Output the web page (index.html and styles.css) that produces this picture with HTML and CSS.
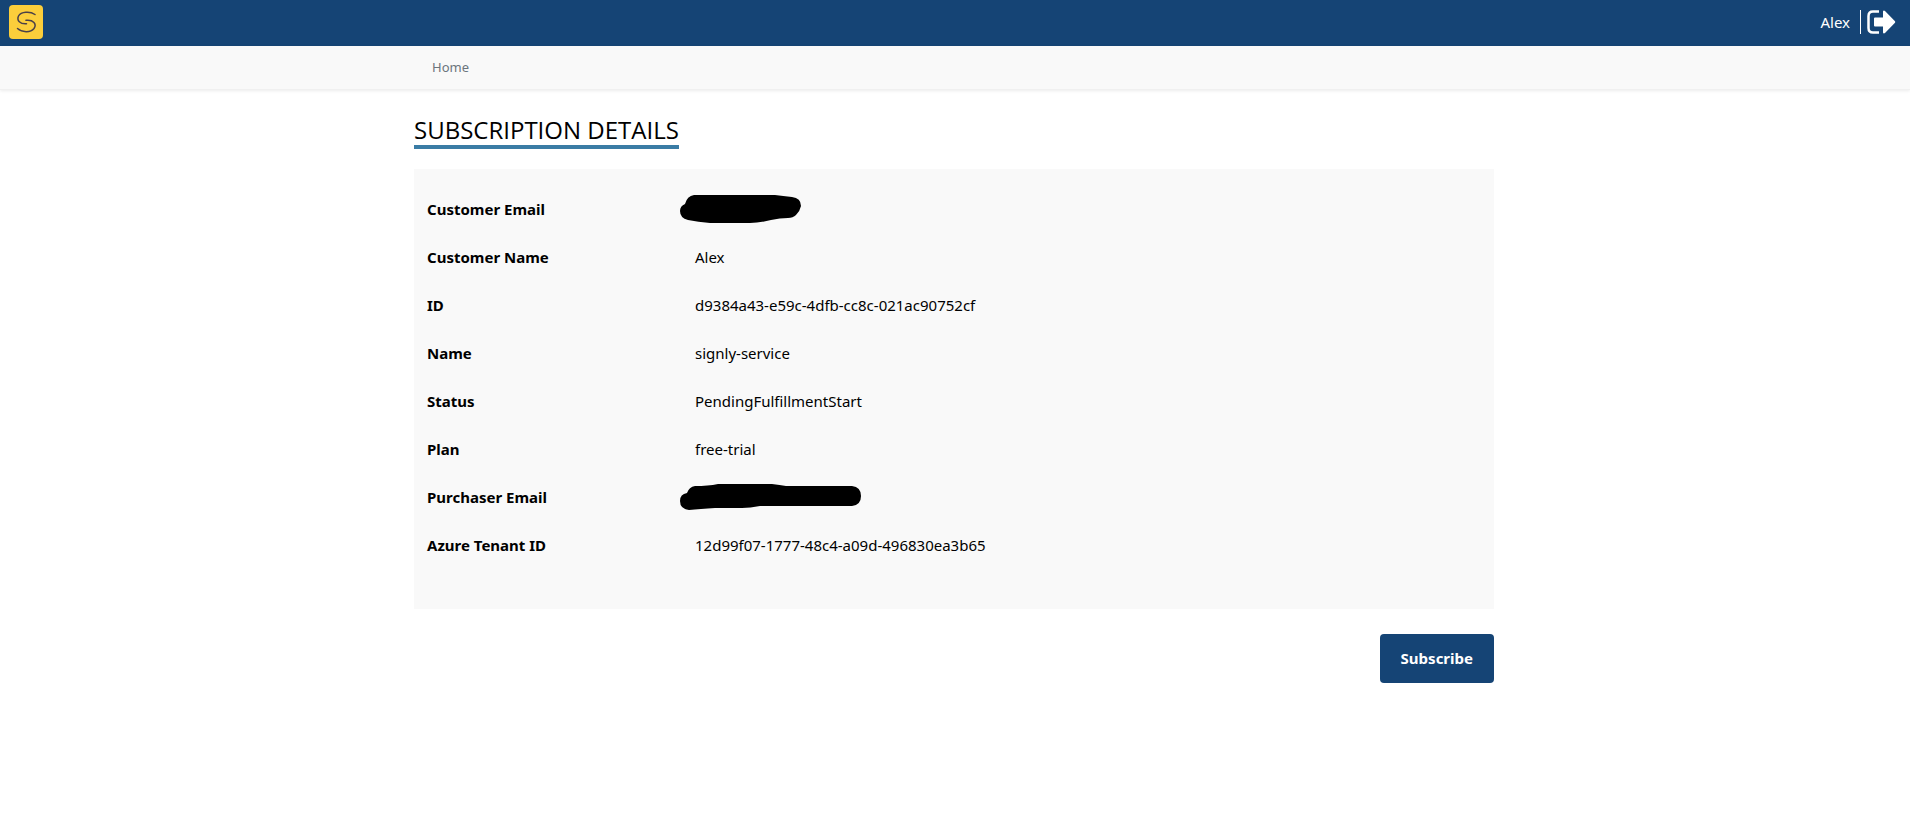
FILE: index.html
```html
<!DOCTYPE html>
<html lang="en">
<head>
  <meta charset="UTF-8" />
  <meta name="viewport" content="width=device-width, initial-scale=1.0"/>
  <title>Subscription Details</title>
  <link rel="stylesheet" href="styles.css">
</head>
<body>

  <header class="topbar">
    <a class="logo" href="#" aria-label="Signly">
      <svg viewBox="0 0 34 34" width="34" height="34">
        <rect width="34" height="34" rx="4" fill="#fbce3b"/>
        <g fill="none" stroke="#4a4048" stroke-width="1.500" stroke-linecap="round">
          <path d="M26 9.500C21 6 12 6.500 9.500 11C7.500 15.500 11 19.300 17.500 18.800"/>
          <path d="M8.500 23.500C13 27.500 21.500 28 25 23.500C28 19 24.500 14.500 17 15.300"/>
        </g>
      </svg>
    </a>
    <div class="user">
      <span class="user-name">Alex</span>
      <a class="logout" href="#" aria-label="Sign out">
        <svg viewBox="0 0 30 24" width="30" height="24">
          <path d="M12 1.500H6Q1.500 1.500 1.500 6V18Q1.500 22.500 6 22.500H12" fill="none" stroke="#fff" stroke-width="2.500"/>
          <path d="M8 7.500H16V1.500Q16.500 0 18 1L28 11.200Q28.500 12 28 12.800L18 23Q16.500 24 16 22.500V16.500H8Q7 16.500 7 15.500V8.500Q7 7.500 8 7.500Z" fill="#fff"/>
        </svg>
      </a>
    </div>
  </header>

  <nav class="navbar">
    <div class="container">
      <a class="nav-link" href="#">Home</a>
    </div>
  </nav>

  <main class="container">
    <h1>Subscription Details</h1>

    <dl class="details">
      <dt>Customer Email</dt>
      <dd>
        <svg class="redacted" viewBox="0 0 122 28" width="122" height="28" role="img" aria-label="Hidden">
          <path d="M14 0H95Q103 1 112 2Q121 3 121 11Q120 16 116 20Q113 23 108 23Q100 23 91 25Q80 28 70 28H30Q18 27 8 25Q0 23 0 16Q0 11 5 9Q7 1 14 0Z"/>
        </svg>
      </dd>
      <dt>Customer Name</dt>
      <dd>Alex</dd>
      <dt>ID</dt>
      <dd>d9384a43-e59c-4dfb-cc8c-021ac90752cf</dd>
      <dt>Name</dt>
      <dd>signly-service</dd>
      <dt>Status</dt>
      <dd>PendingFulfillmentStart</dd>
      <dt>Plan</dt>
      <dd>free-trial</dd>
      <dt>Purchaser Email</dt>
      <dd>
        <svg class="redacted" viewBox="0 0 182 26" width="182" height="26" role="img" aria-label="Hidden">
          <path d="M15 2Q28 2 38 0H92Q100 1 106 2H172Q181 3 181 12Q181 21 172 22H80Q70 24 62 24H35Q20 25 9 26Q0 25 0 17Q0 10 7 9Q9 3 15 2Z"/>
        </svg>
      </dd>
      <dt>Azure Tenant ID</dt>
      <dd>12d99f07-1777-48c4-a09d-496830ea3b65</dd>
    </dl>

    <div class="actions">
      <button class="subscribe-btn" type="button">Subscribe</button>
    </div>
  </main>

</body>
</html>
```
FILE: styles.css
```css
* {
  box-sizing: border-box;
}

body {
  margin: 0;
  font-family: 'Segoe UI', 'Noto Sans', sans-serif;
  font-size: 15px;
  line-height: 24px;
  background: #fff;
  color: #000;
}

a {
  text-decoration: none;
}

svg {
  display: block;
}

.container {
  max-width: 1082px;
  margin: 0 auto;
  padding-right: 2px;
}

.topbar {
  display: flex;
  justify-content: space-between;
  align-items: center;
  height: 46px;
  padding: 0 13px 2px 9px;
  background: #154475;
}

.user {
  display: flex;
  align-items: center;
  gap: 10px;
  color: #fff;
}

.logout {
  padding-left: 6px;
  border-left: 1px solid #fff;
}

.navbar {
  background: #f9f9f9;
  border-bottom: 1px solid #f0f0f0;
  box-shadow: 0 1px 3px rgba(0,0,0,0.08);
}

.nav-link {
  display: inline-block;
  padding: 9px 18px 10px;
  color: #6c757d;
  font-size: 13px;
}

h1 {
  width: fit-content;
  margin: 24px 0 20px;
  border-bottom: 4px solid #3a7ca5;
  font-family: 'Segoe UI', 'Open Sans', sans-serif;
  font-size: 24px;
  font-weight: 400;
  line-height: 31px;
  text-transform: uppercase;
}

.details {
  display: grid;
  grid-template-columns: 268px 1fr;
  grid-auto-rows: 48px;
  align-items: center;
  margin: 0;
  padding: 16px 13px 40px;
  background: #f9f9f9;
}

.details dt {
  font-weight: 700;
}

.details dd {
  margin: 0;
}

.redacted {
  margin-left: -15px;
  fill: #000;
}

.actions {
  display: flex;
  justify-content: flex-end;
  margin-top: 25px;
}

.subscribe-btn {
  padding: 12px 21px 13px;
  border: none;
  border-radius: 4px;
  background: #154475;
  color: #fff;
  font-family: inherit;
  font-size: 15px;
  font-weight: 700;
  line-height: 24px;
  cursor: pointer;
}

.subscribe-btn:hover {
  background: #0f3560;
}
```
